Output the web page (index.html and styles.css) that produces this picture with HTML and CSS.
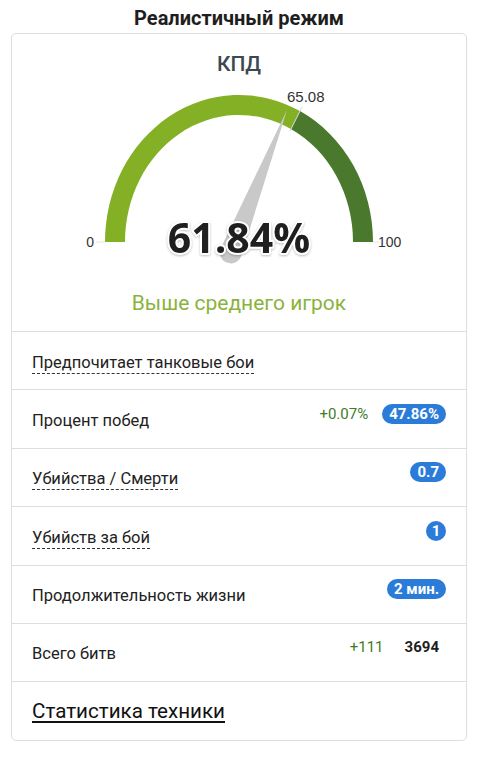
FILE: index.html
```html
<!DOCTYPE html>
<html lang="ru">
<head>
    <meta charset="UTF-8">
    <meta name="viewport" content="width=device-width, initial-scale=1.0">
    <title>Реалистичный режим</title>
    <link rel="stylesheet" href="styles.css">
</head>
<body>
    <div class="wrap">
        <h1 class="mode-title">Реалистичный режим</h1>
        <div class="card">
            <!-- Gauge -->
            <div class="gauge-block">
                <h2 class="gauge-title">КПД</h2>
                <svg class="gauge" width="454" height="190" viewBox="0 0 454 190">
                    <path class="band-low" d="M93 164 A134 147 0 0 1 288.0 33.1 L278.9 50.9 A114 127 0 0 0 113 164 Z"/>
                    <path class="band-high" d="M288.0 33.1 A134 147 0 0 1 361 164 L341 164 A114 127 0 0 0 278.9 50.9 Z"/>
                    <line class="tick" x1="290" y1="29" x2="278" y2="53"/>
                    <line class="edge" x1="84" y1="164" x2="93" y2="164"/>
                    <line class="edge" x1="361" y1="164" x2="367" y2="164"/>
                    <path class="needle" d="M208.8 169.9 L275 32 L229.2 178.1 A11 11 0 1 1 208.8 169.9 Z"/>
                    <text class="avg-label" x="275" y="24">65.08</text>
                    <text class="end-label" x="82" y="169" text-anchor="end">0</text>
                    <text class="end-label" x="366" y="169">100</text>
                    <text class="gauge-value" x="227" y="175" text-anchor="middle">61.84%</text>
                </svg>
                <div class="gauge-caption">Выше среднего игрок</div>
            </div>

            <!-- Stats -->
            <div class="row">
                <span class="label dotted">Предпочитает танковые бои</span>
            </div>
            <div class="row">
                <span class="label">Процент побед</span>
                <span class="values">
                    <span class="delta">+0.07%</span>
                    <span class="badge">47.86%</span>
                </span>
            </div>
            <div class="row">
                <span class="label dotted">Убийства / Смерти</span>
                <span class="values"><span class="badge">0.7</span></span>
            </div>
            <div class="row">
                <span class="label dotted">Убийств за бой</span>
                <span class="values"><span class="badge round">1</span></span>
            </div>
            <div class="row">
                <span class="label">Продолжительность жизни</span>
                <span class="values"><span class="badge">2 мин.</span></span>
            </div>
            <div class="row">
                <span class="label">Всего битв</span>
                <span class="values">
                    <span class="delta">+111</span>
                    <span class="badge plain">3694</span>
                </span>
            </div>
            <div class="row">
                <a class="link" href="#">Статистика техники</a>
            </div>
        </div>
    </div>
</body>
</html>
```

FILE: styles.css
```css
body {
    margin: 0;
    background-color: #fff;
    font-family: Roboto, "Noto Sans", sans-serif;
    color: #222;
}
.wrap {
    width: 456px;
    margin-left: 11px;
}
.mode-title {
    margin: 6px 0 0;
    font-size: 20px;
    font-weight: 700;
    line-height: 24px;
    text-align: center;
    color: #1e1e1e;
}
.card {
    margin-top: 3px;
    border: 1px solid #dedede;
    border-radius: 5px;
}
.gauge-block {
    padding: 17px 0 15px;
    text-align: center;
}
.gauge-title {
    margin: 0;
    font-size: 21px;
    font-weight: 500;
    line-height: 26px;
    color: #3c4852;
}
.gauge {
    display: block;
    margin-top: 1px;
}
.band-low {
    fill: #84b025;
}
.band-high {
    fill: #4a792e;
}
.tick {
    stroke: #d8d8d8;
    stroke-width: 1;
}
.edge {
    stroke: #e4e4e4;
    stroke-width: 1;
}
.needle {
    fill: #c9c9c9;
}
.avg-label, .end-label {
    font-family: "Liberation Sans", Arial, sans-serif;
    fill: #333;
}
.avg-label {
    font-size: 15px;
}
.end-label {
    font-size: 14px;
}
.gauge-value {
    font-family: "Open Sans", sans-serif;
    font-size: 41px;
    font-weight: 700;
    fill: #1f1f1f;
    stroke: #fff;
    stroke-width: 4px;
    stroke-linejoin: round;
    paint-order: stroke;
    filter: drop-shadow(0 1px 1px rgba(0, 0, 0, 0.25));
}
.gauge-caption {
    margin-top: 22px;
    font-size: 21px;
    line-height: 26px;
    color: #8ab33c;
}
.row {
    display: flex;
    justify-content: space-between;
    align-items: flex-start;
    box-sizing: border-box;
    height: 58.4px;
    padding: 0 20px 0 20px;
    border-top: 1px solid #dedede;
}
.label {
    margin-top: 20.5px;
    font-size: 16.5px;
    line-height: 20px;
}
.dotted {
    border-bottom: 1px dashed #333;
}
.values {
    display: flex;
    align-items: center;
    gap: 14px;
    margin-top: 13.5px;
}
.delta {
    font-size: 15px;
    line-height: 20px;
    color: #3d7d2a;
}
.badge {
    display: inline-block;
    padding: 0 7px;
    border-radius: 10px;
    background-color: #2b7bd8;
    color: #fff;
    font-size: 15px;
    font-weight: 700;
    line-height: 20px;
}
.badge.round {
    width: 20px;
    padding: 0;
    text-align: center;
}
.badge.plain {
    background-color: transparent;
    color: #1e1e1e;
}
.link {
    margin-top: 17px;
    font-size: 20.6px;
    line-height: 24px;
    color: #111;
    text-decoration: underline;
    text-decoration-thickness: 2px;
    text-underline-offset: 3px;
}
```
